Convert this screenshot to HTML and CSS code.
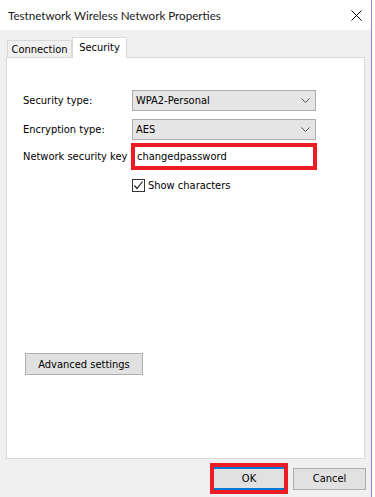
FILE: index.html
```html
<!DOCTYPE html>
<html>
<head>
<meta charset="utf-8">
<link rel="stylesheet" href="styles.css">
</head>
<body>
<div class="window">
  <div class="titlebar">
    <span class="title">Testnetwork Wireless Network Properties</span>
    <svg class="close" width="11" height="11" viewBox="0 0 11 11"><path d="M0.5 0.5 L10.5 10.5 M10.5 0.5 L0.5 10.5" stroke="#000" stroke-width="1" fill="none"/></svg>
  </div>
  <div class="client">
    <div class="tabs">
      <div class="tab">Connection</div>
      <div class="tab active">Security</div>
    </div>
    <div class="panel">
      <div class="row r1">
        <span class="label">Security type:</span>
        <div class="select"><span>WPA2-Personal</span><svg width="9" height="5" viewBox="0 0 9 5"><path d="M0.5 0.5 L4.5 4.5 L8.5 0.5" stroke="#555" stroke-width="1" fill="none"/></svg></div>
      </div>
      <div class="row r2">
        <span class="label">Encryption type:</span>
        <div class="select"><span>AES</span><svg width="9" height="5" viewBox="0 0 9 5"><path d="M0.5 0.5 L4.5 4.5 L8.5 0.5" stroke="#555" stroke-width="1" fill="none"/></svg></div>
      </div>
      <div class="row r3">
        <span class="label">Network security key</span>
        <div class="mark key"><div class="input">changedpassword</div></div>
      </div>
      <div class="row r4">
        <span class="label"></span>
        <div class="check"><span class="box"><svg width="11" height="11" viewBox="0 0 11 11"><path d="M1.5 5.5 L4 8.5 L9.5 1.5" stroke="#222" stroke-width="1.2" fill="none"/></svg></span><span>Show characters</span></div>
      </div>
      <div class="btn advanced">Advanced settings</div>
    </div>
    <div class="footer">
      <div class="mark okmark"><div class="btn ok">OK</div></div>
      <div class="btn cancel">Cancel</div>
    </div>
  </div>
</div>
</body>
</html>
```
FILE: styles.css
```css
html, body {
  margin: 0;
  padding: 0;
  background: #ffffff;
}
body {
  width: 375px;
  height: 497px;
  overflow: hidden;
  font-family: "DejaVu Sans Condensed", "DejaVu Sans", sans-serif;
  font-size: 11px;
  color: #000;
}
.window {
  width: 372px;
  height: 497px;
  border-right: 1px solid #8d8bd1;
  display: flex;
  flex-direction: column;
  box-sizing: border-box;
}
.titlebar {
  height: 30px;
  flex: none;
  background: #fff;
  display: flex;
  align-items: center;
  justify-content: space-between;
  padding: 0 9px 0 8px;
}
.title {
  font-family: "Lato", "Open Sans", sans-serif;
  font-size: 11.6px;
  font-weight: 400;
  color: #1a1a1a;
}
.close {
  display: block;
}
.client {
  flex: 1;
  background: #f0f0f0;
  padding: 7px 5px 0 6px;
  display: flex;
  flex-direction: column;
}
.tabs {
  display: flex;
  align-items: flex-end;
  height: 20px;
  padding-left: 1px;
}
.tab {
  height: 17px;
  box-sizing: border-box;
  border: 1px solid #d9d9d9;
  border-bottom: none;
  background: #f0f0f0;
  width: 65px;
  display: flex;
  align-items: center;
  justify-content: center;
  padding-top: 1px;
}
.tab.active {
  width: 55px;
  height: 21px;
  background: #fff;
  margin-bottom: -1px;
  z-index: 1;
  padding-top: 0;
  padding-bottom: 2px;
}
.panel {
  width: 359px;
  height: 402px;
  box-sizing: border-box;
  border: 1px solid #d9d9d9;
  background: #fff;
  display: flex;
  flex-direction: column;
  align-items: flex-start;
  padding: 32px 0 83px 16px;
}
.row {
  display: flex;
  align-items: center;
}
.label {
  width: 109px;
  flex: none;
}
.r1 { height: 21px; }
.r2 { height: 21px; margin-top: 8px; }
.r3 { height: 27px; margin-top: 3px; }
.r4 { height: 13px; margin-top: 9px; }
.select {
  width: 184px;
  height: 21px;
  box-sizing: border-box;
  border: 1px solid #acacac;
  background: #e5e5e5;
  display: flex;
  align-items: center;
  justify-content: space-between;
  padding: 0 5px 0 3px;
}
.mark {
  border: 4px solid #ed1c24;
  box-sizing: border-box;
}
.key {
  width: 186px;
  height: 27px;
  margin-left: -1px;
}
.input {
  height: 19px;
  display: flex;
  align-items: center;
  padding-left: 2px;
}
.check {
  display: flex;
  align-items: center;
  gap: 3px;
  height: 13px;
}
.box {
  width: 13px;
  height: 13px;
  box-sizing: border-box;
  border: 1px solid #333;
  display: flex;
  align-items: center;
  justify-content: center;
  background: #fff;
}
.box svg { display: block; }
.btn {
  box-sizing: border-box;
  background: #e1e1e1;
  border: 1px solid #adadad;
  display: flex;
  align-items: center;
  justify-content: center;
  height: 22px;
}
.advanced {
  width: 118px;
  margin-top: auto;
  margin-left: 2px;
}
.footer {
  display: flex;
  justify-content: flex-end;
  align-items: center;
  gap: 5px;
  margin-top: 4px;
}
.okmark {
  width: 78px;
  height: 31px;
}
.ok {
  width: 100%;
  height: 23px;
  border: none;
  border-top: 2px solid #0078d7;
  border-bottom: 2px solid #0078d7;
}
.cancel {
  width: 73px;
}
```
